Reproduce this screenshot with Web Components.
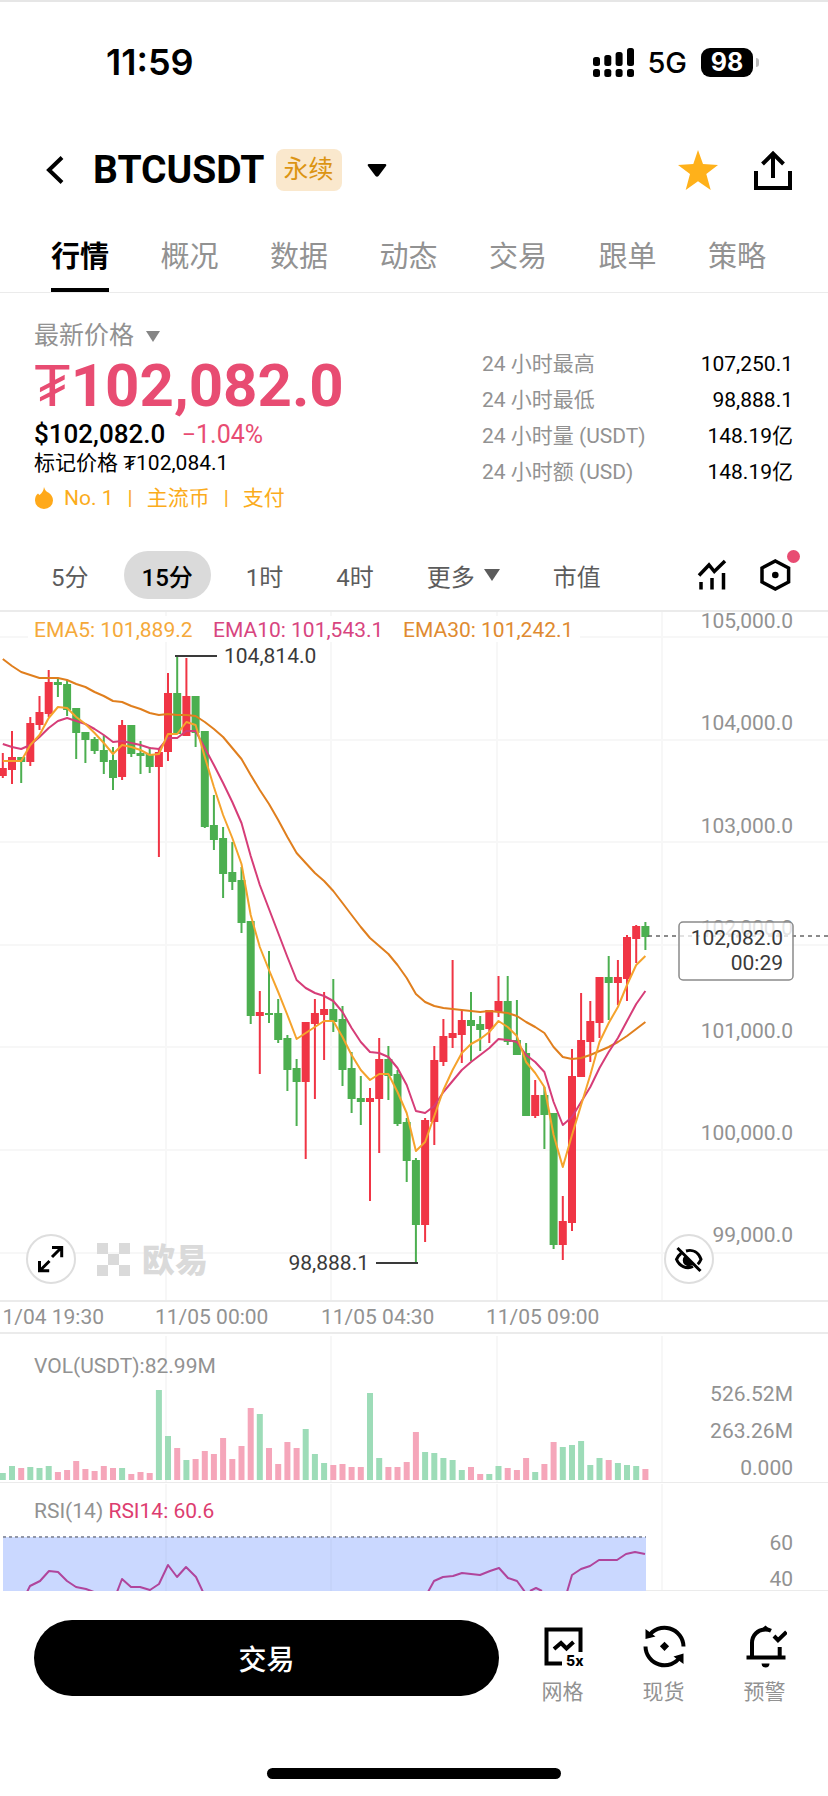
<!DOCTYPE html>
<html lang="zh-CN">
<head>
<meta charset="utf-8">
<meta name="viewport" content="width=device-width, initial-scale=1">
<title>BTCUSDT 永续</title>
<style>
  :root {
    --text: #000;
    --muted: #929292;
    --accent: #e84c72;
    --gold: #fbac1c;
    --up: #f03545;
    --down: #4caf50;
    --line: #ebebeb;
  }
  body {
    margin: 0;
    background: #fff;
    color: var(--text);
    font-family: Roboto, "Noto Sans CJK SC", sans-serif;
    font-size: 21px;
  }
</style>
</head>
<body>
  <market-page></market-page>

<script>
const resetCss = `
  * { box-sizing: border-box; }
  button {
    margin: 0;
    padding: 0;
    border: 0;
    background: none;
    color: inherit;
    font: inherit;
    white-space: nowrap;
    cursor: pointer;
  }
  svg { display: block; flex: none; }
`;

class BaseElement extends HTMLElement {
  constructor() {
    super();
    this.attachShadow({ mode: "open" });
    this.shadowRoot.innerHTML = `<style>${resetCss}</style>${this.render()}`;
  }

  render() {
    return "";
  }
}

class StatusBar extends BaseElement {
  render() {
    return `
      <style>
        :host {
          display: flex;
          align-items: center;
          justify-content: space-between;
          height: 122px;
          padding: 0 69px 0 106px;
          border-top: 2px solid #e6e6e6;
          font-family: Inter, sans-serif;
        }
        time { font-size: 36px; font-weight: 600; }
        .right { display: flex; align-items: center; }
        .network { margin: 0 14px 0 12px; font-size: 29px; font-weight: 500; }
        .battery {
          width: 52px;
          border-radius: 9px;
          background: #000;
          color: #fff;
          font-size: 25px;
          font-weight: 700;
          line-height: 29px;
          text-align: center;
        }
        .tip {
          width: 3px;
          height: 9px;
          margin-left: 3px;
          border-radius: 0 3px 3px 0;
          background: #bbb;
        }
      </style>
      <time>11:59</time>
      <div class="right">
        <svg width="42" height="29" viewBox="0 0 42 29">
          <rect x="0" y="9" width="7" height="9" rx="2.5"/>
          <rect x="11.3" y="7" width="7" height="11" rx="2.5"/>
          <rect x="22.6" y="4" width="7" height="14" rx="2.5"/>
          <rect x="34" y="0" width="7" height="18" rx="2.5"/>
          <rect x="0" y="21" width="7" height="8" rx="2.5"/>
          <rect x="11.3" y="21" width="7" height="8" rx="2.5"/>
          <rect x="22.6" y="21" width="7" height="8" rx="2.5"/>
          <rect x="34" y="21" width="7" height="8" rx="2.5"/>
        </svg>
        <span class="network">5G</span>
        <span class="battery">98</span>
        <span class="tip"></span>
      </div>
    `;
  }
}

class PairHeader extends BaseElement {
  render() {
    return `
      <style>
        :host {
          display: flex;
          align-items: center;
          height: 96px;
          padding: 0 36px 0 44px;
        }
        .back { margin-right: 27px; }
        h1 { margin: 0; font-size: 39px; font-weight: 700; }
        .pair { display: flex; align-items: center; }
        .badge {
          margin: 0 25px 0 11px;
          padding: 0 8px;
          border-radius: 8px;
          background: #fae8cd;
          color: #dc9412;
          font-size: 25px;
          line-height: 42px;
        }
        .star { margin-left: auto; margin-right: 36px; }
      </style>
      <button class="back" aria-label="返回">
        <svg width="22" height="30" viewBox="0 0 22 30" fill="none" stroke="#000" stroke-width="4">
          <path d="M18 2.5 5 15 18 27.5"/>
        </svg>
      </button>
      <h1><slot></slot></h1>
      <button class="pair" aria-label="切换交易对">
        <span class="badge"><slot name="badge"></slot></span>
        <svg width="20" height="13" viewBox="0 0 20 13"><path d="M2 0h16q2 0 1 2l-7.5 10q-1.5 1.5-3 0L1 2Q0 0 2 0z"/></svg>
      </button>
      <button class="star" aria-label="收藏">
        <svg width="40" height="40" viewBox="0 0 40 40" fill="#ffb11a">
          <path d="M20 0l5 14 15 1-11.7 9 4.4 16L20 31.3 7.7 40 12 24 0 15l15.3-1z"/>
        </svg>
      </button>
      <button aria-label="分享">
        <svg width="38" height="40" viewBox="0 0 38 40" fill="none" stroke="#000" stroke-width="4">
          <path d="M2 21v17h34V21M19 28V4M8.5 14 19 3.5 29.5 14"/>
        </svg>
      </button>
    `;
  }
}

class TabBar extends BaseElement {
  render() {
    const tabs = ["行情", "概况", "数据", "动态", "交易", "跟单", "策略"];
    return `
      <style>
        :host { display: block; border-bottom: 1px solid var(--line); }
        nav { display: flex; justify-content: space-between; padding: 0 62px 0 51px; }
        button {
          height: 74px;
          border-top: 2px solid transparent;
          border-bottom: 4px solid transparent;
          color: var(--muted);
          font-size: 29px;
        }
        button.active { border-bottom-color: #000; color: #000; font-weight: 700; }
      </style>
      <nav>
        ${tabs.map((name, i) => `<button class="${i === 0 ? "active" : ""}">${name}</button>`).join("")}
      </nav>
    `;
  }
}

class PriceSummary extends BaseElement {
  render() {
    const stats = [
      ["24 小时最高", "107,250.1"],
      ["24 小时最低", "98,888.1"],
      ["24 小时量 (USDT)", "148.19亿"],
      ["24 小时额 (USD)", "148.19亿"],
    ];
    return `
      <style>
        :host {
          display: flex;
          justify-content: space-between;
          padding: 25px 35px 0 34px;
        }
        .source {
          display: flex;
          align-items: center;
          gap: 12px;
          color: var(--muted);
          font-size: 25px;
          line-height: 36px;
        }
        .price { color: var(--accent); font-size: 60px; font-weight: 700; line-height: 64px; }
        .sign { font-weight: 400; }
        .usd { font-size: 26px; font-weight: 500; line-height: 32px; }
        .usd span { margin-left: 10px; color: var(--accent); font-size: 25px; font-weight: 400; }
        .mark { line-height: 24px; }
        .tags {
          display: flex;
          align-items: center;
          gap: 14px;
          margin-top: 10px;
          color: var(--gold);
          line-height: 26px;
        }
        .tags svg { margin-right: -4px; }
        dl { width: 311px; margin: 28px 0 0; line-height: 36px; }
        dl div { display: flex; justify-content: space-between; }
        dt { color: var(--muted); }
        dd { margin: 0; }
      </style>
      <section>
        <button class="source">最新价格
          <svg width="14" height="11" viewBox="0 0 14 11" fill="#858585"><path d="M0 0h14L7 11z"/></svg>
        </button>
        <div class="price"><span class="sign">₮</span>102,082.0</div>
        <div class="usd">$102,082.0 <span>−1.04%</span></div>
        <div class="mark">标记价格 ₮102,084.1</div>
        <div class="tags">
          <svg width="20" height="22" viewBox="0 0 20 22" fill="#ffa91a">
            <path d="M10 0c1 4 3.5 5 5 6 2 1.5 4 4 4 7.5A9 8.5 0 0 1 1 13.5C1 10 2 8 4 6.5l1.5 1.5C8 6 9.5 4 10 0z"/>
          </svg>
          <span>No. 1</span><span>|</span><span>主流币</span><span>|</span><span>支付</span>
        </div>
      </section>
      <dl>
        ${stats.map(([label, value]) => `<div><dt>${label}</dt><dd>${value}</dd></div>`).join("")}
      </dl>
    `;
  }
}

class IntervalBar extends BaseElement {
  render() {
    return `
      <style>
        :host {
          display: flex;
          align-items: center;
          justify-content: space-between;
          margin-top: 40px;
          padding: 0 35px 11px 33px;
        }
        nav { display: flex; gap: 17px; }
        nav button {
          display: flex;
          align-items: center;
          gap: 9px;
          height: 48px;
          padding: 0 18px;
          border-radius: 24px;
          color: #5c5c5c;
          font-size: 24px;
        }
        nav .active { background: #dadada; color: #000; font-weight: 500; }
        .tools { display: flex; gap: 27px; }
        .tools svg { fill: none; stroke: #000; stroke-width: 3.5; }
        .settings { position: relative; }
        .settings::after {
          content: "";
          position: absolute;
          top: -7px;
          right: -7px;
          width: 13px;
          height: 13px;
          border-radius: 50%;
          background: var(--accent);
        }
      </style>
      <nav>
        <button>5分</button>
        <button class="active">15分</button>
        <button>1时</button>
        <button>4时</button>
        <button>更多
          <svg width="16" height="12" viewBox="0 0 16 12" fill="#5c5c5c"><path d="M0 0h16L8 12z"/></svg>
        </button>
        <button>市值</button>
      </nav>
      <div class="tools">
        <button aria-label="指标">
          <svg width="36" height="36" viewBox="0 0 36 36">
            <path d="M5 18.5 15 8l5.3 6.5L31 4M7 25v7.5M18 21v11.5M29.5 16v16.5"/>
          </svg>
        </button>
        <button class="settings" aria-label="设置">
          <svg width="36" height="36" viewBox="0 0 36 36">
            <path d="M18.3 4 31.6 11v14l-13.3 7L5 25V11z"/>
            <circle cx="18.3" cy="18" r="3.3" fill="#000" stroke="none"/>
          </svg>
        </button>
      </div>
    `;
  }
}

// One row per 15m candle: high, body top, body bottom, low, volume.
// The first four are plot coordinates. A leading "+" marks a rising candle.
const candles = `
+753 768 776 778 7|+731 757 770 784 14|-757 757 762 783 12|+717 723 762 766 13|+696 712 725 730 12
+670 682 714 717 14|-679 682 685 697 8|-680 684 710 716 10|-708 708 733 759 19|-732 732 740 763 11
-737 739 751 754 9|-735 750 762 774 14|-747 760 778 790 12|+720 725 777 780 12|-725 725 754 757 6
-741 753 756 774 8|-747 754 767 773 7|+748 752 767 857 90|+673 693 752 761 44|-655 693 734 734 32
+658 696 736 736 20|-696 696 733 747 21|-731 731 827 828 29|-795 825 840 850 26|-827 838 874 898 42
-842 872 882 890 21|-867 880 923 933 34|-921 921 1016 1024 72|+991 1012 1016 1074 66|-951 1013 1014 1023 32
-999 1013 1040 1043 16|-1035 1038 1070 1091 38|-1059 1068 1082 1126 32|+1022 1022 1082 1159 51|+999 1013 1024 1099 26
+992 1009 1015 1060 17|-979 1009 1022 1032 15|-1006 1019 1070 1086 16|-1052 1068 1099 1113 13|-1076 1098 1102 1125 13
+1088 1098 1102 1201 87|+1038 1059 1099 1153 22|-1046 1059 1076 1100 13|-1070 1074 1124 1126 13|-1118 1122 1161 1182 18
-1158 1160 1225 1262 48|+1118 1120 1225 1242 28|+1046 1060 1122 1145 27|+1019 1036 1062 1066 22|+960 1033 1038 1048 20
+1010 1020 1035 1063 10|-992 1020 1026 1061 13|-1016 1024 1030 1051 6|+1010 1010 1029 1043 6|+976 1001 1012 1017 14
-976 1001 1042 1045 12|-1000 1040 1055 1055 10|-1043 1053 1116 1116 22|+1080 1095 1116 1118 8|-1087 1095 1115 1149 16
-1113 1113 1245 1249 38|+1196 1221 1245 1260 33|+1049 1076 1223 1231 35|+993 1040 1077 1077 39|+1001 1021 1042 1062 15
+977 977 1023 1038 22|-956 977 983 1020 20|+960 977 983 1005 17|+935 937 979 1001 15|+925 926 939 963 14
-922 926 937 950 11
`.trim().split(/[|\n]/).map((row) => {
  const [high, top, bottom, low, volume] = row.slice(1).split(" ").map(Number);
  return { rising: row[0] === "+", high, top, bottom, low, volume };
});

const ema5 = [761,761,761,745,735,718,707,708,717,724,733,743,754,745,747,750,755,754,734,734,722,725,757,787,815,838,864,915,947,970,992,1015,1039,1033,1027,1021,1021,1037,1055,1070,1080,1074,1074,1092,1113,1151,1142,1116,1090,1070,1053,1044,1039,1032,1021,1027,1036,1062,1073,1087,1135,1167,1135,1105,1075,1042,1023,1007,985,965,956];
const ema10 = [744,747,749,745,737,728,721,718,721,724,729,735,742,741,743,745,748,749,738,738,731,731,748,765,783,802,823,856,885,909,933,957,980,988,993,996,1001,1012,1028,1042,1052,1053,1057,1068,1085,1111,1113,1106,1092,1081,1070,1062,1055,1048,1039,1040,1042,1055,1062,1072,1102,1125,1117,1102,1087,1068,1052,1038,1021,1004,991];
const ema30 = [659,666,672,675,678,678,678,680,684,687,692,696,701,702,706,709,713,715,714,715,715,716,722,729,737,748,759,775,790,804,820,837,853,863,873,881,891,903,915,927,938,946,954,965,978,994,1002,1006,1008,1009,1010,1011,1012,1011,1012,1013,1016,1022,1027,1033,1047,1057,1059,1058,1055,1051,1047,1042,1036,1029,1022];

const candleX = (i) => 2.8 + i * 9.18;
const toPoints = (values) => values.map((y, i) => `${candleX(i).toFixed(1)},${y}`).join(" ");
const gridColumns = [166, 331, 497, 662];

const chartCss = `
  :host { display: block; position: relative; }
  svg { width: 100%; height: auto; }
  text { font-size: 21px; fill: #929292; }
  .grid { stroke: #f7f7f7; stroke-width: 2; }
  .edge { stroke: #ebebeb; stroke-width: 2; }
  .end { text-anchor: end; }
`;

class PriceChart extends BaseElement {
  renderCandles() {
    return candles.map((c, i) => {
      const x = candleX(i);
      return `<g fill="var(${c.rising ? "--up" : "--down"})">
        <rect x="${(x - 1).toFixed(1)}" y="${c.high}" width="2" height="${c.low - c.high}"/>
        <rect x="${(x - 4).toFixed(1)}" y="${c.top}" width="8" height="${Math.max(c.bottom - c.top, 2)}"/>
      </g>`;
    }).join("");
  }

  render() {
    const levels = ["105,000.0", "104,000.0", "103,000.0", "102,000.0", "101,000.0", "100,000.0", "99,000.0"];
    const rows = levels.map((_, i) => Math.round(637 + i * 102.6));
    return `
      <style>
        ${chartCss}
        .ema { fill: none; stroke-width: 2; stroke-linejoin: round; }
        .note text { fill: #3a3a3a; }
        .note path { stroke: #3a3a3a; stroke-width: 2; }
        .note .last { stroke: #666; stroke-width: 1.5; stroke-dasharray: 4 4; }
        .watermark { fill: #dadada; }
        .watermark text { fill: #dadada; font-size: 33px; font-weight: 900; }
        button {
          position: absolute;
          bottom: 50px;
          width: 50px;
          height: 50px;
          border: 2px solid #dedede;
          border-radius: 50%;
          background: #fff;
        }
        button svg { width: 46px; height: 46px; fill: none; stroke: #000; stroke-width: 3; }
        .expand { left: 26px; }
        .hide { right: 114px; }
      </style>
      <svg viewBox="0 610 828 724">
        <g class="grid">
          ${gridColumns.map((x) => `<path d="M${x} 612V1301"/>`).join("")}
          ${rows.map((y) => `<path d="M0 ${y}H828"/>`).join("")}
        </g>
        <rect x="28" y="616" width="552" height="26" fill="#fff"/>
        <path class="edge" d="M0 611H828M0 1301H828M0 1333H828"/>

        <g class="watermark">
          <path d="M97 1243h11v11h11v-11h11v11h-11v11h11v11h-11v-11h-11v11h-11v-11h11v-11h-11z"/>
          <text x="142" y="1272">欧易</text>
        </g>

        ${this.renderCandles()}
        <polyline class="ema" stroke="#e07f1e" points="${toPoints(ema30)}"/>
        <polyline class="ema" stroke="#d63d78" points="${toPoints(ema10)}"/>
        <polyline class="ema" stroke="#f5a32c" points="${toPoints(ema5)}"/>

        <text x="34" y="637" style="fill:#f5a93a">EMA5: 101,889.2</text>
        <text x="213" y="637" style="fill:#d8457f">EMA10: 101,543.1</text>
        <text x="403" y="637" style="fill:#e08a30">EMA30: 101,242.1</text>

        ${levels.map((label, i) => `<text class="end" x="793" y="${Math.round(628 + i * 102.4)}">${label}</text>`).join("")}

        <g class="note">
          <path d="M175 656h42M376 1263h42"/>
          <text x="224" y="663">104,814.0</text>
          <text class="end" x="369" y="1270">98,888.1</text>
          <path class="last" d="M648 936H828"/>
          <rect x="679" y="922" width="114" height="58" rx="4" fill="#fff" fill-opacity=".75" stroke="#8a8a8a" stroke-width="1.5"/>
          <text class="end" x="783" y="945">102,082.0</text>
          <text class="end" x="783" y="970">00:29</text>
        </g>

        <text class="end" x="104" y="1324">11/04 19:30</text>
        <text x="155" y="1324">11/05 00:00</text>
        <text x="321" y="1324">11/05 04:30</text>
        <text x="486" y="1324">11/05 09:00</text>
      </svg>
      <button class="expand" aria-label="全屏">
        <svg viewBox="2 2 46 46">
          <path d="M26 13.5h9.7v9.7M35.5 13.5 26 23M23.5 27 14 36.5M13.5 27v9.7h9.7"/>
        </svg>
      </button>
      <button class="hide" aria-label="隐藏">
        <svg viewBox="2 2 46 46">
          <path d="M13.5 14 36.5 37M22 17c7-2 12.5 1.5 15 8.3-.8 2-1.9 3.7-3.2 5M17 19.5c-2 1.5-3.5 3.5-4.5 5.8C15 32 22.5 35.5 29 32.5"/>
          <path d="M20.5 22 29 30.5a5 5 0 0 1-8.5-8.5z" fill="#000" stroke="none"/>
        </svg>
      </button>
    `;
  }
}

class VolumeChart extends BaseElement {
  render() {
    const bars = candles.map((c, i) => {
      const color = c.rising ? "#9ddcb8" : "#f5a6ba";
      return `<rect x="${(candleX(i) - 3).toFixed(1)}" y="${146 - c.volume}" width="6" height="${c.volume}" fill="${color}"/>`;
    }).join("");
    return `
      <style>${chartCss}</style>
      <svg viewBox="0 0 828 149">
        <g class="grid">${gridColumns.map((x) => `<path d="M${x} 2V148"/>`).join("")}</g>
        ${bars}
        <path class="edge" d="M0 149H828"/>
        <text x="34" y="39">VOL(USDT):82.99M</text>
        <text class="end" x="793" y="67">526.52M</text>
        <text class="end" x="793" y="104">263.26M</text>
        <text class="end" x="793" y="141">0.000</text>
      </svg>
    `;
  }
}

class RsiChart extends BaseElement {
  render() {
    // only the part above the fold; each run leaves and re-enters at the bottom edge
    const runs = [
      "27,109 30,103 40,98 49,88 58,89 67,98 76,104 86,106 94,109",
      "117,109 122,96 131,104 140,104 150,107 159,101 168,82 177,94 186,84 196,94 203,109",
      "428,109 434,98 443,94 453,93 462,90 480,92 490,88 499,85 508,95 517,98 525,109",
      "530,108 536,105 542,108",
      "567,109 572,92 581,86 590,83 599,77 617,77 626,71 635,69 645,71",
    ];
    return `
      <style>
        ${chartCss}
        polyline { fill: none; stroke: #b0459c; stroke-width: 2; stroke-linejoin: round; }
        tspan { fill: #dd3d70; }
      </style>
      <svg viewBox="0 0 828 108">
        <rect x="3" y="54" width="643" height="54" fill="#cad8ff"/>
        <g class="grid">
          ${gridColumns.map((x) => `<path d="M${x} 1V54"/>`).join("")}
          <path d="M662 54V108"/>
        </g>
        <path d="M166 56V108M331 56V108M497 56V108" stroke="#c0cef4" stroke-width="1"/>
        <path d="M3 54H646" stroke="#9197a8" stroke-width="2" stroke-dasharray="3 3"/>
        ${runs.map((points) => `<polyline points="${points}"/>`).join("")}
        <path class="edge" d="M646 108H828"/>
        <text x="34" y="35">RSI(14) <tspan>RSI14: 60.6</tspan></text>
        <text class="end" x="793" y="67">60</text>
        <text class="end" x="793" y="103">40</text>
      </svg>
    `;
  }
}

class ActionItem extends BaseElement {
  render() {
    return `
      <style>
        :host { display: block; width: 101px; }
        button {
          display: flex;
          flex-direction: column;
          align-items: center;
          gap: 10px;
          width: 100%;
          padding-top: 4px;
          color: var(--muted);
          font-size: 21px;
          line-height: 28px;
        }
      </style>
      <button><slot name="icon"></slot><slot></slot></button>
    `;
  }
}

class ActionBar extends BaseElement {
  render() {
    return `
      <style>
        :host { display: flex; align-items: flex-start; padding: 29px 13px 0 34px; }
        .trade {
          flex: 1;
          height: 76px;
          margin-right: 13px;
          border-radius: 38px;
          background: #000;
          color: #fff;
          font-size: 28px;
          font-weight: 500;
        }
        svg { fill: none; stroke: #000; stroke-width: 4; }
        .solid { fill: #000; stroke: none; }
        svg text { font: 800 14px Inter, sans-serif; }
      </style>
      <button class="trade">交易</button>
      <action-item>
        <svg slot="icon" width="44" height="44" viewBox="0 0 44 44">
          <path d="M39.5 28V5.5h-34v34H21M13 25l7-6 5.5 5.5 7-6.5"/>
          <text class="solid" x="25" y="42">5x</text>
        </svg>
        网格
      </action-item>
      <action-item>
        <svg slot="icon" width="44" height="44" viewBox="0 0 44 44">
          <path d="M6.5 12.5A19 19 0 0 1 41.5 22.5M3.5 22.5A19 19 0 0 0 38.5 32.5"/>
          <path class="solid" d="M3.5 5v10l10-2.5zM41.5 40V29.5l-10 3zM22.5 17.7l4.6 4.6-4.6 4.6-4.6-4.6z"/>
        </svg>
        现货
      </action-item>
      <action-item>
        <svg slot="icon" width="44" height="44" viewBox="0 0 44 44">
          <path d="M3.5 33.5h39M9 33V19C9 11 15 5.5 22.5 5.5q3 0 5.5 1.2M36.7 23v10M31 12l4 4.2L43.5 8"/>
          <path class="solid" d="M18.5 39.5h8a4 4 0 0 1-8 0zM22.5 1.5l4 3.5h-8z"/>
        </svg>
        预警
      </action-item>
    `;
  }
}

class HomeIndicator extends BaseElement {
  render() {
    return `
      <style>
        :host { display: block; margin-top: auto; padding: 0 0 17px; }
        div { width: 294px; height: 11px; margin: 0 auto; border-radius: 6px; background: #000; }
      </style>
      <div></div>
    `;
  }
}

class MarketPage extends BaseElement {
  render() {
    return `
      <style>
        :host { display: flex; flex-direction: column; min-height: 100vh; }
      </style>
      <status-bar></status-bar>
      <pair-header>BTCUSDT<span slot="badge">永续</span></pair-header>
      <tab-bar></tab-bar>
      <price-summary></price-summary>
      <interval-bar></interval-bar>
      <price-chart></price-chart>
      <volume-chart></volume-chart>
      <rsi-chart></rsi-chart>
      <action-bar></action-bar>
      <home-indicator></home-indicator>
    `;
  }
}

customElements.define("status-bar", StatusBar);
customElements.define("pair-header", PairHeader);
customElements.define("tab-bar", TabBar);
customElements.define("price-summary", PriceSummary);
customElements.define("interval-bar", IntervalBar);
customElements.define("price-chart", PriceChart);
customElements.define("volume-chart", VolumeChart);
customElements.define("rsi-chart", RsiChart);
customElements.define("action-item", ActionItem);
customElements.define("action-bar", ActionBar);
customElements.define("home-indicator", HomeIndicator);
customElements.define("market-page", MarketPage);
</script>
</body>
</html>
